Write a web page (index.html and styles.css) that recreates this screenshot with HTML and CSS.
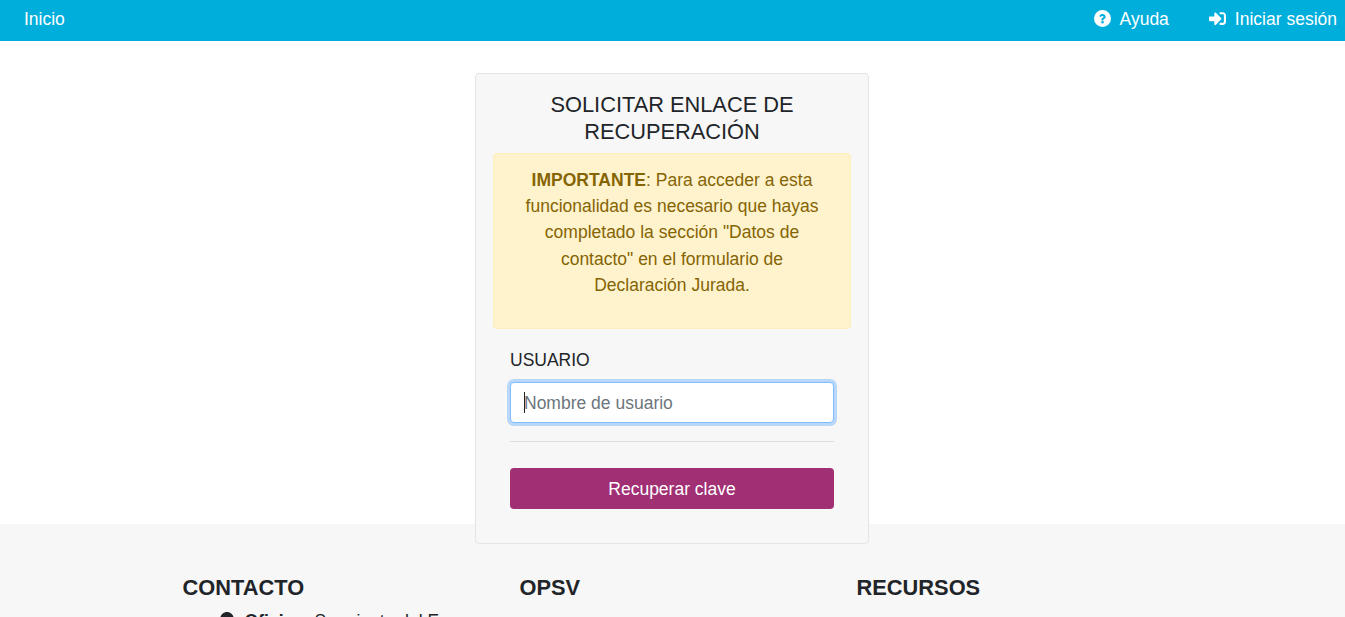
FILE: index.html
```html
<!DOCTYPE html>
<html lang="es">
<head>
    <meta charset="UTF-8">
    <meta name="viewport" content="width=device-width, initial-scale=1.0">
    <title>Solicitar enlace de recuperación</title>
    <link rel="stylesheet" href="styles.css">
</head>
<body>
    <nav class="navbar">
        <a class="nav-link" href="#">Inicio</a>
        <div class="nav-right">
            <a class="nav-link" href="#">
                <svg class="nav-icon" viewBox="8 8 496 496"><path fill="currentColor" fill-rule="evenodd" d="M256 8a248 248 0 1 0 0 496 248 248 0 0 0 0-496zm0 392a38 38 0 1 1 0-76 38 38 0 0 1 0 76zm44-128c-10 6-12 10-12 18v8c0 7-5 12-12 12h-40c-7 0-12-5-12-12v-12c0-30 22-44 39-54 15-8 24-14 24-25 0-15-19-25-34-25-20 0-29 10-42 26-4 5-11 6-16 2l-25-19c-5-4-6-11-3-16 21-32 48-50 90-50 44 0 91 34 91 79 0 48-29 60-48 68z"/></svg>
                Ayuda
            </a>
            <a class="nav-link" href="#">
                <svg class="nav-icon" viewBox="0 0 512 512"><path fill="currentColor" d="M416 448h-84c-7 0-12-5-12-12v-40c0-7 5-12 12-12h84c18 0 32-14 32-32V160c0-18-14-32-32-32h-84c-7 0-12-5-12-12V76c0-7 5-12 12-12h84c53 0 96 43 96 96v192c0 53-43 96-96 96zM369 247 201 79c-15-15-41-4-41 17v96H24c-13 0-24 11-24 24v96c0 13 11 24 24 24h136v96c0 21 26 32 41 17l168-168c9-10 9-24 0-34z"/></svg>
                Iniciar sesión
            </a>
        </div>
    </nav>

    <main class="main">
        <div class="card">
            <h4 class="card-title">SOLICITAR ENLACE DE RECUPERACIÓN</h4>
            <div class="alert">
                <p><strong>IMPORTANTE</strong>: Para acceder a esta funcionalidad es necesario que hayas completado la sección "Datos de contacto" en el formulario de Declaración Jurada.</p>
            </div>
            <form class="form">
                <label class="form-label" for="usuario">USUARIO</label>
                <div class="input-wrap">
                    <input class="form-input" id="usuario" type="text" placeholder="Nombre de usuario">
                    <span class="caret"></span>
                </div>
                <hr class="divider">
                <button class="btn" type="button">Recuperar clave</button>
            </form>
        </div>
    </main>

    <footer class="footer">
        <div class="footer-inner">
            <div class="footer-col">
                <h5>CONTACTO</h5>
                <ul>
                    <li><svg class="pin" viewBox="0 0 384 512"><path fill="currentColor" d="M172 502C27 291 0 269 0 192 0 86 86 0 192 0s192 86 192 192c0 77-27 99-172 310-10 14-30 14-40 0z"/></svg><strong>Oficina:</strong> Sarmiento del E</li>
                </ul>
            </div>
            <div class="footer-col">
                <h5>OPSV</h5>
            </div>
            <div class="footer-col">
                <h5>RECURSOS</h5>
            </div>
        </div>
    </footer>
</body>
</html>
```

FILE: styles.css
```css
* {
    box-sizing: border-box;
}

html, body {
    height: 617px;
    overflow: hidden;
}

body {
    margin: 0;
    font-family: "Liberation Sans", Arial, sans-serif;
    font-size: 17.5px;
    line-height: 1.5;
    color: #212529;
    background-color: #fff;
}

.navbar {
    display: flex;
    justify-content: space-between;
    align-items: center;
    height: 41px;
    padding: 0 8px 3px 24px;
    background-color: #00aedb;
}

.nav-link {
    color: #fff;
    text-decoration: none;
    display: flex;
    align-items: center;
}

.nav-right {
    display: flex;
    gap: 40px;
}

.nav-icon {
    width: 17px;
    height: 17px;
    margin: 0 9px 2px 0;
}

.main {
    height: 483px;
    padding: 32px 1px 0 0;
    display: flex;
    justify-content: center;
}

.card {
    position: relative;
    z-index: 1;
    width: 394px;
    height: 471px;
    padding: 17px;
    background-color: #f7f7f7;
    border: 1px solid #e4e4e4;
    border-radius: 4px;
}

.card-title {
    margin: 0 0 8px;
    font-size: 21.8px;
    font-weight: 400;
    line-height: 27px;
    text-align: center;
}

.alert {
    height: 176px;
    padding: 12.55px 20px;
    color: #856404;
    background-color: #fff3cd;
    border: 1px solid #ffeeba;
    border-radius: 4px;
    text-align: center;
}

.alert p {
    margin: 0;
    line-height: 26.4px;
}

.form {
    padding: 18px 17px 0;
}

.form-label {
    display: block;
    line-height: 27px;
    margin-bottom: 8px;
}

.input-wrap {
    position: relative;
}

.form-input {
    display: block;
    width: 100%;
    height: 41px;
    padding: 7px 13px 5px;
    font-family: inherit;
    font-size: 17.5px;
    color: #495057;
    background-color: #fff;
    border: 1px solid #80bdff;
    border-radius: 4px;
    outline: 0;
    box-shadow: 0 0 0 3px rgba(0, 123, 255, 0.25);
}

.form-input::placeholder {
    color: #6c757d;
    opacity: 1;
}

.caret {
    position: absolute;
    left: 14px;
    top: 10px;
    width: 1px;
    height: 21px;
    background-color: #212529;
}

.divider {
    margin: 18px 0 26px;
    border: 0;
    border-top: 1px solid #dfdfdf;
}

.btn {
    display: block;
    width: 100%;
    height: 41px;
    padding: 2px 0 0;
    font-family: inherit;
    font-size: 17.5px;
    color: #fff;
    background-color: #a02f74;
    border: 0;
    border-radius: 4px;
}

.footer {
    height: 300px;
    background-color: #f7f7f7;
}

.footer-inner {
    display: grid;
    grid-template-columns: repeat(3, 337px);
    padding: 49px 0 0 182.6px;
}

.footer-col h5 {
    margin: 0 0 6px;
    font-size: 21.8px;
    font-weight: 700;
    line-height: 29px;
}

.footer-col ul {
    margin: 0;
    padding: 0 0 0 37px;
    list-style: none;
}

.pin {
    width: 14px;
    height: 18px;
    margin-right: 11px;
    vertical-align: -3px;
}
```
